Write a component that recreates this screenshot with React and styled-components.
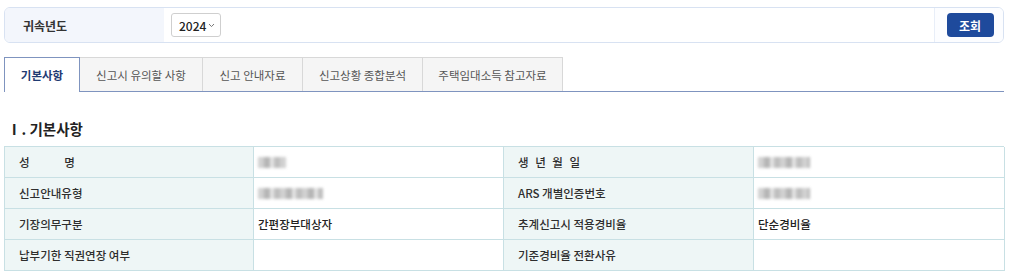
import React from "react";
import styled, { createGlobalStyle } from "styled-components";

const Global = createGlobalStyle`
  html, body { margin: 0; padding: 0; background: #fff; }
  body { font-family: "Noto Sans CJK KR", "Noto Sans", sans-serif; color: #333; }
  * { box-sizing: border-box; }
`;

const Page = styled.div`
  padding: 7px 20px 0 4px;
  width: 1024px;
`;

const SearchBar = styled.div`
  display: flex;
  align-items: stretch;
  height: 36px;
  border: 1px solid #d8e2f2;
  border-radius: 6px;
  overflow: hidden;
  background: #fff;
`;

const SearchLabel = styled.div`
  width: 159px;
  background: #f3f6fc;
  display: flex;
  align-items: center;
  padding-left: 18px;
  font-size: 12px;
  font-weight: 700;
  color: #333;
`;

const SearchField = styled.div`
  flex: 1;
  display: flex;
  align-items: center;
  padding-left: 7px;
`;

const Select = styled.div`
  display: flex;
  align-items: center;
  gap: 2px;
  height: 24px;
  padding: 0 5px 0 7px;
  border: 1px solid #cfcfcf;
  border-radius: 3px;
  font-size: 12px;
  font-weight: 500;
  color: #222;
  background: #fff;
`;

const ButtonCell = styled.div`
  width: 69px;
  border-left: 1px solid #e8eef8;
  background: #fcfdff;
  display: flex;
  align-items: center;
  justify-content: center;
  padding-left: 2px;
`;

const Button = styled.button`
  width: 47px;
  height: 24px;
  border: none;
  border-radius: 4px;
  background: #1e4a9c;
  color: #fff;
  font-family: inherit;
  font-size: 12px;
  font-weight: 700;
  padding: 0;
`;

const Tabs = styled.div`
  display: flex;
  margin-top: 14px;
  height: 35px;
  border-bottom: 1px solid #7f94bf;
`;

const Tab = styled.div`
  width: ${(p) => p.$w}px;
  display: flex;
  align-items: center;
  justify-content: center;
  font-size: 11.5px;
  background: ${(p) => (p.$active ? "#fff" : "#f5f5f5")};
  color: ${(p) => (p.$active ? "#1f3b73" : "#555")};
  font-weight: ${(p) => (p.$active ? 700 : 400)};
  border: 1px solid ${(p) => (p.$active ? "#7f94bf" : "#d8d8d8")};
  border-bottom: none;
  border-left-width: ${(p) => (p.$first ? 1 : 0)}px;
  margin-bottom: ${(p) => (p.$active ? "-1px" : "0")};
  height: ${(p) => (p.$active ? "35px" : "34px")};
  align-self: flex-end;
`;

const Heading = styled.h2`
  margin: 27px 0 0 3px;
  font-size: 14.5px;
  font-weight: 700;
  color: #222;
  height: 27px;
  line-height: 20px;
`;

const Table = styled.div`
  display: grid;
  grid-template-columns: 249px 250px 250px 251px;
  border-top: 1px solid #c8e0e4;
  border-left: 1px solid #c8e0e4;
`;

const Cell = styled.div`
  height: 31px;
  display: flex;
  align-items: center;
  font-size: 11.5px;
  font-weight: 500;
  border-right: 1px solid #c8e0e4;
  border-bottom: 1px solid #c8e0e4;
  background: ${(p) => (p.$label ? "#eef6f6" : "#fff")};
  color: ${(p) => (p.$label ? "#2e2e2e" : "#222")};
  padding-left: ${(p) => (p.$label ? "14px" : "4px")};
`;

const Spaced = styled.span`
  word-spacing: ${(p) => p.$ws}px;
`;

const Masked = styled.span`
  display: inline-block;
  width: ${(p) => p.$w}px;
  height: 11px;
  background: repeating-linear-gradient(
    90deg,
    #c9c9c9 0 6px,
    #a9a9a9 6px 12px,
    #e0e0e0 12px 16px,
    #b4b4b4 16px 22px
  );
  filter: blur(1.6px);
  opacity: 0.85;
`;

function Chevron() {
  return (
    <svg width="7" height="5" viewBox="0 0 7 5">
      <path d="M1 1 L3.5 3.6 L6 1" fill="none" stroke="#777" strokeWidth="1" />
    </svg>
  );
}

export default function App() {
  const tabs = [
    ["기본사항", 76],
    ["신고시 유의할 사항", 123],
    ["신고 안내자료", 100],
    ["신고상황 종합분석", 120],
    ["주택임대소득 참고자료", 140],
  ];
  return (
    <>
      <Global />
      <Page>
        <SearchBar>
          <SearchLabel>귀속년도</SearchLabel>
          <SearchField>
            <Select>
              2024 <Chevron />
            </Select>
          </SearchField>
          <ButtonCell>
            <Button>조회</Button>
          </ButtonCell>
        </SearchBar>

        <Tabs>
          {tabs.map(([t, w], i) => (
            <Tab key={t} $w={w} $active={i === 0} $first={i === 0}>
              {t}
            </Tab>
          ))}
        </Tabs>

        <Heading>Ⅰ. 기본사항</Heading>

        <Table>
          <Cell $label>
            <Spaced $ws={32}>성 명</Spaced>
          </Cell>
          <Cell>
            <Masked $w={28} />
          </Cell>
          <Cell $label>
            <Spaced $ws={4}>생 년 월 일</Spaced>
          </Cell>
          <Cell>
            <Masked $w={52} />
          </Cell>

          <Cell $label>신고안내유형</Cell>
          <Cell>
            <Masked $w={65} />
          </Cell>
          <Cell $label>ARS 개별인증번호</Cell>
          <Cell>
            <Masked $w={52} />
          </Cell>

          <Cell $label>기장의무구분</Cell>
          <Cell>간편장부대상자</Cell>
          <Cell $label>추계신고시 적용경비율</Cell>
          <Cell>단순경비율</Cell>

          <Cell $label>납부기한 직권연장 여부</Cell>
          <Cell />
          <Cell $label>기준경비율 전환사유</Cell>
          <Cell />
        </Table>
      </Page>
    </>
  );
}
